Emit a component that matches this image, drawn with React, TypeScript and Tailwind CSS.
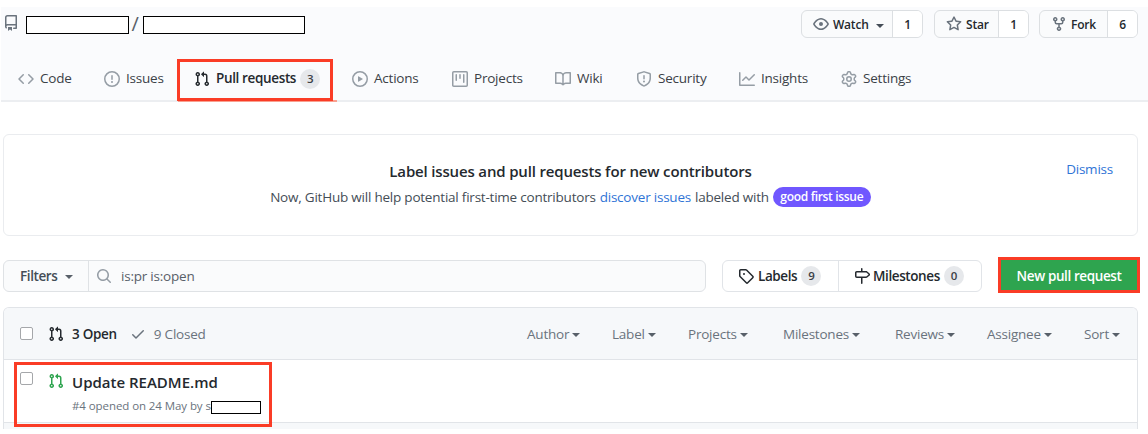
import type { ReactNode } from "react";

const paths = {
  repo: "M2 2.5A2.5 2.5 0 014.5 0h8.75a.75.75 0 01.75.75v12.5a.75.75 0 01-.75.75h-2.5a.75.75 0 110-1.5h1.75v-2h-8a1 1 0 00-.714 1.7.75.75 0 01-1.072 1.05A2.495 2.495 0 012 11.5v-9zm10.5-1V9h-8c-.356 0-.694.074-1 .208V2.5a1 1 0 011-1h8zM5 12.25v3.25a.25.25 0 00.4.2l1.45-1.087a.25.25 0 01.3 0L8.6 15.7a.25.25 0 00.4-.2v-3.25a.25.25 0 00-.25-.25h-3.5a.25.25 0 00-.25.25z",
  code: "M4.72 3.22a.75.75 0 011.06 1.06L2.06 8l3.72 3.72a.75.75 0 11-1.06 1.06L.47 8.53a.75.75 0 010-1.06l4.25-4.25zm6.56 0a.75.75 0 10-1.06 1.06L13.94 8l-3.72 3.72a.75.75 0 101.06 1.06l4.25-4.25a.75.75 0 000-1.06l-4.25-4.25z",
  issue: "M8 1.5a6.5 6.5 0 100 13 6.5 6.5 0 000-13zM0 8a8 8 0 1116 0A8 8 0 010 8zm9 3a1 1 0 11-2 0 1 1 0 012 0zm-.25-6.25a.75.75 0 00-1.5 0v3.5a.75.75 0 001.5 0v-3.5z",
  pull: "M7.177 3.073L9.573.677A.25.25 0 0110 .854v4.792a.25.25 0 01-.427.177L7.177 3.427a.25.25 0 010-.354zM3.75 2.5a.75.75 0 100 1.5.75.75 0 000-1.5zm-2.25.75a2.25 2.25 0 113 2.122v5.256a2.251 2.251 0 11-1.5 0V5.372A2.25 2.25 0 011.5 3.25zM11 2.5h-1V4h1a1 1 0 011 1v5.628a2.251 2.251 0 101.5 0V5A2.5 2.5 0 0011 2.5zm1 10.25a.75.75 0 111.5 0 .75.75 0 01-1.5 0zM3.75 12a.75.75 0 100 1.5.75.75 0 000-1.5z",
  play: "M1.5 8a6.5 6.5 0 1113 0 6.5 6.5 0 01-13 0zM8 0a8 8 0 100 16A8 8 0 008 0zM6.379 5.227A.25.25 0 006 5.442v5.117a.25.25 0 00.379.214l4.264-2.559a.25.25 0 000-.428L6.379 5.227z",
  project: "M1.75 0A1.75 1.75 0 000 1.75v12.5C0 15.216.784 16 1.75 16h12.5A1.75 1.75 0 0016 14.25V1.75A1.75 1.75 0 0014.25 0H1.75zM1.5 1.75a.25.25 0 01.25-.25h12.5a.25.25 0 01.25.25v12.5a.25.25 0 01-.25.25H1.75a.25.25 0 01-.25-.25V1.75zM11.75 3a.75.75 0 00-.75.75v7.5a.75.75 0 001.5 0v-7.5a.75.75 0 00-.75-.75zm-8.25.75a.75.75 0 011.5 0v5.5a.75.75 0 01-1.5 0v-5.5zM8 3a.75.75 0 00-.75.75v3.5a.75.75 0 001.5 0v-3.5A.75.75 0 008 3z",
  book: "M0 1.75A.75.75 0 01.75 1h4.253c1.227 0 2.317.59 3 1.501A3.744 3.744 0 0111.006 1h4.245a.75.75 0 01.75.75v10.5a.75.75 0 01-.75.75h-4.507a2.25 2.25 0 00-1.591.659l-.622.621a.75.75 0 01-1.06 0l-.622-.621A2.25 2.25 0 005.258 13H.75a.75.75 0 01-.75-.75V1.75zm8.755 3a2.25 2.25 0 012.25-2.25H14.5v9h-3.757c-.71 0-1.4.201-1.992.572l.004-7.322zm-1.504 7.324l.004-5.073-.002-2.253A2.25 2.25 0 005.003 2.5H1.5v9h3.757a3.75 3.75 0 011.994.574z",
  shield: "M7.467.133a1.75 1.75 0 011.066 0l5.25 1.68A1.75 1.75 0 0115 3.48V7c0 1.566-.32 3.182-1.303 4.682-.983 1.498-2.585 2.813-5.032 3.855a1.7 1.7 0 01-1.33 0c-2.447-1.042-4.049-2.357-5.032-3.855C1.32 10.182 1 8.566 1 7V3.48a1.75 1.75 0 011.217-1.667l5.25-1.68zm.61 1.429a.25.25 0 00-.153 0l-5.25 1.68a.25.25 0 00-.174.238V7c0 1.358.275 2.666 1.057 3.86.784 1.194 2.121 2.34 4.366 3.297a.2.2 0 00.154 0c2.245-.956 3.582-2.104 4.366-3.298C13.225 9.666 13.5 8.36 13.5 7V3.48a.25.25 0 00-.174-.237l-5.25-1.68zM9 10.5a1 1 0 11-2 0 1 1 0 012 0zm-.25-5.75a.75.75 0 10-1.5 0v3a.75.75 0 001.5 0v-3z",
  graph: "M1.5 1.75a.75.75 0 00-1.5 0v12.5c0 .414.336.75.75.75h14.5a.75.75 0 000-1.5H1.5V1.75zm14.28 2.53a.75.75 0 00-1.06-1.06L10 7.94 7.53 5.47a.75.75 0 00-1.06 0L3.22 8.72a.75.75 0 001.06 1.06L7 7.06l2.47 2.47a.75.75 0 001.06 0l5.25-5.25z",
  gear: "M7.429 1.525a6.593 6.593 0 011.142 0c.036.003.108.036.137.146l.289 1.105c.147.56.55.967.997 1.189.174.086.341.183.501.29.417.278.97.423 1.53.27l1.102-.303c.11-.03.175.016.195.046.219.31.41.641.573.989.014.031.022.11-.059.19l-.815.806c-.411.406-.562.957-.53 1.456a4.588 4.588 0 010 .582c-.032.499.119 1.05.53 1.456l.815.806c.08.08.073.159.059.19a6.494 6.494 0 01-.573.99c-.02.029-.086.074-.195.045l-1.103-.303c-.559-.153-1.112-.008-1.529.27-.16.107-.327.204-.5.29-.449.222-.851.628-.998 1.189l-.289 1.105c-.029.11-.101.143-.137.146a6.613 6.613 0 01-1.142 0c-.036-.003-.108-.037-.137-.146l-.289-1.105c-.147-.56-.55-.967-.997-1.189a4.502 4.502 0 01-.501-.29c-.417-.278-.97-.423-1.53-.27l-1.102.303c-.11.03-.175-.016-.195-.046a6.492 6.492 0 01-.573-.989c-.014-.031-.022-.11.059-.19l.815-.806c.411-.406.562-.957.53-1.456a4.587 4.587 0 010-.582c.032-.499-.119-1.05-.53-1.456l-.815-.806c-.08-.08-.073-.159-.059-.19a6.44 6.44 0 01.573-.99c.02-.029.086-.075.195-.045l1.103.303c.559.153 1.112.008 1.529-.27.16-.107.327-.204.5-.29.449-.222.851-.628.998-1.189l.289-1.105c.029-.11.101-.143.137-.146zM8 0c-.236 0-.47.01-.701.03-.743.065-1.29.615-1.458 1.261l-.29 1.106c-.017.066-.078.158-.211.224a5.994 5.994 0 00-.668.386c-.123.082-.233.09-.3.071L3.27 2.776c-.644-.177-1.392.02-1.82.63a7.977 7.977 0 00-.704 1.217c-.315.675-.111 1.422.363 1.891l.815.806c.05.048.098.147.088.294a6.084 6.084 0 000 .772c.01.147-.038.246-.088.294l-.815.806c-.474.469-.678 1.216-.363 1.891.2.428.436.835.704 1.218.428.609 1.176.806 1.82.63l1.103-.303c.066-.019.176-.011.299.071.213.143.436.272.668.386.133.066.194.158.212.224l.289 1.106c.169.646.715 1.196 1.458 1.26a8.094 8.094 0 001.402 0c.743-.064 1.29-.614 1.458-1.26l.29-1.106c.017-.066.078-.158.211-.224a5.98 5.98 0 00.668-.386c.123-.082.233-.09.3-.071l1.102.302c.644.177 1.392-.02 1.82-.63.268-.382.505-.789.704-1.217.315-.675.111-1.422-.364-1.891l-.814-.806c-.05-.048-.098-.147-.088-.294a6.1 6.1 0 000-.772c-.01-.147.039-.246.088-.294l.814-.806c.475-.469.679-1.216.364-1.891a7.992 7.992 0 00-.704-1.218c-.428-.609-1.176-.806-1.82-.63l-1.103.303c-.066.019-.176.011-.299-.071a5.991 5.991 0 00-.668-.386c-.133-.066-.194-.158-.212-.224L10.16 1.29C9.99.645 9.444.095 8.701.031A8.094 8.094 0 008 0zm1.5 8a1.5 1.5 0 11-3 0 1.5 1.5 0 013 0zM11 8a3 3 0 11-6 0 3 3 0 016 0z",
  eye: "M1.679 7.932c.412-.621 1.242-1.75 2.366-2.717C5.175 4.242 6.527 3.5 8 3.5c1.473 0 2.824.742 3.955 1.715 1.124.967 1.954 2.096 2.366 2.717a.119.119 0 010 .136c-.412.621-1.242 1.75-2.366 2.717C10.825 11.758 9.473 12.5 8 12.5c-1.473 0-2.824-.742-3.955-1.715C2.92 9.818 2.09 8.69 1.679 8.068a.119.119 0 010-.136zM8 2c-1.981 0-3.67.992-4.933 2.078C1.797 5.169.88 6.423.43 7.1a1.619 1.619 0 000 1.798c.45.678 1.367 1.932 2.637 3.024C4.329 13.008 6.019 14 8 14c1.981 0 3.67-.992 4.933-2.078 1.27-1.091 2.187-2.345 2.637-3.023a1.619 1.619 0 000-1.798c-.45-.678-1.367-1.932-2.637-3.023C11.671 2.992 9.981 2 8 2zm0 8a2 2 0 100-4 2 2 0 000 4z",
  star: "M8 .25a.75.75 0 01.673.418l1.882 3.815 4.21.612a.75.75 0 01.416 1.279l-3.046 2.97.719 4.192a.75.75 0 01-1.088.791L8 12.347l-3.766 1.98a.75.75 0 01-1.088-.79l.72-4.194L.818 6.374a.75.75 0 01.416-1.28l4.21-.611L7.327.668A.75.75 0 018 .25zm0 2.445L6.615 5.5a.75.75 0 01-.564.41l-3.097.45 2.24 2.184a.75.75 0 01.216.664l-.528 3.084 2.769-1.456a.75.75 0 01.698 0l2.77 1.456-.53-3.084a.75.75 0 01.216-.664l2.24-2.183-3.096-.45a.75.75 0 01-.564-.41L8 2.694v.001z",
  fork: "M5 3.25a.75.75 0 11-1.5 0 .75.75 0 011.5 0zm0 2.122a2.25 2.25 0 10-1.5 0v.878A2.25 2.25 0 005.75 8.5h1.5v2.128a2.251 2.251 0 101.5 0V8.5h1.5a2.25 2.25 0 002.25-2.25v-.878a2.25 2.25 0 10-1.5 0v.878a.75.75 0 01-.75.75h-4.5A.75.75 0 015 6.25v-.878zm3.75 7.378a.75.75 0 11-1.5 0 .75.75 0 011.5 0zm3-8.75a.75.75 0 100-1.5.75.75 0 000 1.5z",
  tag: "M2.5 7.775V2.75a.25.25 0 01.25-.25h5.025a.25.25 0 01.177.073l6.25 6.25a.25.25 0 010 .354l-5.025 5.025a.25.25 0 01-.354 0l-6.25-6.25a.25.25 0 01-.073-.177zm-1.5 0V2.75C1 1.784 1.784 1 2.75 1h5.025c.464 0 .91.184 1.238.513l6.25 6.25a1.75 1.75 0 010 2.474l-5.026 5.026a1.75 1.75 0 01-2.474 0l-6.25-6.25A1.75 1.75 0 011 7.775zM6 5a1 1 0 100 2 1 1 0 000-2z",
  milestone: "M7.75 0a.75.75 0 01.75.75V3h3.634c.414 0 .814.147 1.13.414l2.07 1.75a1.75 1.75 0 010 2.672l-2.07 1.75a1.75 1.75 0 01-1.13.414H8.5v5.25a.75.75 0 11-1.5 0V10H2.75A1.75 1.75 0 011 8.25v-3.5C1 3.784 1.784 3 2.75 3H7V.75A.75.75 0 017.75 0zm0 8.5h4.384a.25.25 0 00.161-.06l2.07-1.75a.25.25 0 000-.38l-2.07-1.75a.25.25 0 00-.161-.06H2.75a.25.25 0 00-.25.25v3.5c0 .138.112.25.25.25h5z",
  search: "M11.5 7a4.499 4.499 0 11-8.998 0A4.499 4.499 0 0111.5 7zm-.82 4.74a6 6 0 111.06-1.06l3.04 3.04a.75.75 0 11-1.06 1.06l-3.04-3.04z",
  check: "M13.78 4.22a.75.75 0 010 1.06l-7.25 7.25a.75.75 0 01-1.06 0L2.22 9.28a.75.75 0 011.06-1.06L6 10.94l6.72-6.72a.75.75 0 011.06 0z",
};

type IconName = keyof typeof paths;

function Icon({ name, className = "" }: { name: IconName; className?: string }) {
  return (
    <svg viewBox="0 0 16 16" className={`size-4 shrink-0 fill-current ${className}`}>
      <path fillRule="evenodd" d={paths[name]} />
    </svg>
  );
}

function Caret({ className = "" }: { className?: string }) {
  return (
    <svg viewBox="0 0 8 4" className={`h-1 w-2 shrink-0 fill-current ${className}`}>
      <path d="M0 0h8L4 4z" />
    </svg>
  );
}

function Counter({ children }: { children: ReactNode }) {
  return (
    <span className="flex h-5 w-5 shrink-0 items-center justify-center rounded-full bg-[#e6e8eb] text-[11.5px] font-semibold text-[#3b4046]">
      {children}
    </span>
  );
}

const tabs: { icon: IconName; label: string; width: string; count?: number }[] = [
  { icon: "code", label: "Code", width: "w-[86px]" },
  { icon: "issue", label: "Issues", width: "w-[90px]" },
  { icon: "pull", label: "Pull requests", width: "w-[158px]", count: 3 },
  { icon: "play", label: "Actions", width: "w-[100px]" },
  { icon: "project", label: "Projects", width: "w-[103px]" },
  { icon: "book", label: "Wiki", width: "w-[81px]" },
  { icon: "shield", label: "Security", width: "w-[103px]" },
  { icon: "graph", label: "Insights", width: "w-[102px]" },
  { icon: "gear", label: "Settings", width: "w-[90px]" },
];

const actions: { icon: IconName; label: string; count: number; width: string; pad: string; gap: string; caret?: boolean }[] = [
  { icon: "eye", label: "Watch", count: 1, width: "w-[122px]", pad: "pl-[11px]", gap: "mr-[11px]", caret: true },
  { icon: "star", label: "Star", count: 1, width: "w-[95px]", pad: "pl-[11px]", gap: "mr-[10px]" },
  { icon: "fork", label: "Fork", count: 6, width: "w-[99px]", pad: "pl-[11px]", gap: "mr-[10px]" },
];

const menus = [
  { label: "Author", width: "w-[85px]" },
  { label: "Label", width: "w-[76px]" },
  { label: "Projects", width: "w-[95px]" },
  { label: "Milestones", width: "w-[112px]" },
  { label: "Reviews", width: "w-[92px]" },
  { label: "Assignee", width: "w-[97px]" },
  { label: "Sort", width: "w-[53px]" },
];

function Checkbox() {
  return <span className="block size-[13px] shrink-0 rounded-[2px] border border-[#a5a7aa] bg-white" />;
}

export default function App() {
  return (
    <div className="relative h-[434px] w-[1148px] overflow-hidden bg-white pt-[7px] font-['Open_Sans','Noto_Sans',sans-serif] text-[13.5px] tracking-[-0.22px] whitespace-nowrap text-[#24292e]">
      <header className="ml-px flex h-[95px] flex-col border-b-2 border-[#eceef1] bg-[#fafbfd]">
        <div className="flex h-[34px] items-center">
          <Icon name="repo" className="-mt-[2px] ml-[2px] text-[#6a737d]" />
          <span className="mt-[2px] ml-[7px] h-[18px] w-[103px] border border-black bg-white" />
          <span className="w-[12px] text-center text-[20px] text-[#586069]">/</span>
          <span className="mt-[2px] ml-[2px] h-[18px] w-[162px] border border-black bg-white" />
          <div className="ml-auto flex">
            {actions.map((a) => (
              <div
                key={a.label}
                className={`flex h-[28px] overflow-hidden rounded-md border border-[#dcdfe2] bg-[#fafbfc] text-[12px] font-semibold ${a.width} ${a.gap}`}
              >
                <div className={`flex flex-1 items-center ${a.pad}`}>
                  <Icon name={a.icon} className="mr-1 text-[#6a737d]" />
                  <span className="pt-px">{a.label}</span>
                  {a.caret && <Caret className="mt-1 ml-[7px] text-[#444d56]" />}
                </div>
                <span className="flex w-[30px] items-center justify-center border-l border-[#dcdfe2] bg-white pt-px">
                  {a.count}
                </span>
              </div>
            ))}
          </div>
        </div>
        <nav className="flex flex-1 items-center pt-[16px] pl-[17px]">
          {tabs.map((t) => (
            <div
              key={t.label}
              className={`flex shrink-0 items-center ${t.width} ${t.count ? "font-semibold tracking-[-0.36px]" : ""}`}
            >
              <Icon name={t.icon} className={t.count ? "text-[#24292e]" : "text-[#959da5]"} />
              <span className={`ml-[6px] ${t.count ? "mr-[4px]" : "text-[#3b4147]"}`}>{t.label}</span>
              {t.count && <Counter>{t.count}</Counter>}
            </div>
          ))}
        </nav>
      </header>

      <section className="mt-[32px] ml-[3px] flex h-[102px] w-[1135px] rounded-md border border-[#eaecef]">
        <div className="w-[266px]" />
        <div className="flex w-[601px] flex-col items-center pt-[25px]">
          <h2 className="text-[15px] leading-[22px] font-semibold tracking-[-0.16px]">
            Label issues and pull requests for new contributors
          </h2>
          <p className="mt-[4px] flex items-center leading-[20px] text-[#444d56]">
            Now, GitHub will help potential first-time contributors
            <a className="ml-1 text-[#2f74d6]">discover issues</a>
            <span className="ml-1">labeled with</span>
            <span className="mt-px ml-1 flex h-5 w-[98px] items-center justify-center rounded-full bg-[#7057ff] text-[12px] font-semibold tracking-[-0.32px] text-white">
              good first issue
            </span>
          </p>
        </div>
        <a className="ml-auto pt-[24px] pr-[24px] leading-[20px] text-[#2f74d6]">Dismiss</a>
      </section>

      <div className="mt-[24px] ml-[3px] flex h-[32px]">
        <div className="flex w-[703px] rounded-md border border-[#dfe2e5] bg-[#fafbfc]">
          <div className="flex w-[85px] items-center border-r border-[#dfe2e5] pl-[16px] font-semibold tracking-[-0.4px] text-[#444d56]">
            <span className="pt-px">Filters</span>
            <Caret className="mt-[2px] ml-[8px] text-[#586069]" />
          </div>
          <div className="flex items-center pl-[7px] text-[#586069]">
            <Icon name="search" className="mr-[9px] text-[#959da5]" />
            <span className="pt-px">is:pr is:open</span>
          </div>
        </div>
        <div className="ml-[16px] flex w-[260px] rounded-md border border-[#e1e4e8] font-semibold tracking-[-0.4px]">
          <div className="flex w-[116px] items-center border-r border-[#e1e4e8] pl-[15px]">
            <Icon name="tag" />
            <span className="mr-[4px] ml-[4px] pt-px">Labels</span>
            <Counter>9</Counter>
          </div>
          <div className="flex items-center pl-[15px]">
            <Icon name="milestone" />
            <span className="mr-[4px] ml-[3px] pt-px">Milestones</span>
            <Counter>0</Counter>
          </div>
        </div>
        <button className="-mt-[3px] ml-[16px] flex h-[36px] w-[142px] items-center justify-center border-[3px] border-[#fa3c26] bg-[#2ea44f] pt-[3px] font-semibold tracking-[-0.4px] text-white">
          New pull request
        </button>
      </div>

      <section className="mt-[15px] ml-[3px] h-[122px] w-[1135px] overflow-hidden rounded-t-md border border-b-0 border-[#e1e4e8]">
        <div className="flex h-[52px] items-center border-b border-[#e1e4e8] bg-[#f6f8fa] pl-[16px] text-[#6a737d]">
          <Checkbox />
          <Icon name="pull" className="mt-px ml-[15px] text-[#24292e]" />
          <span className="ml-[8px] pt-[2px] font-semibold tracking-[-0.3px] text-[#24292e]">3 Open</span>
          <Icon name="check" className="mt-px ml-[13px]" />
          <span className="ml-[8px] pt-[2px]">9 Closed</span>
          <div className="ml-auto flex">
            {menus.map((m) => (
              <span key={m.label} className={`flex items-center ${m.width}`}>
                <span className="pt-[2px]">{m.label}</span>
                <Caret className="mt-[3px] ml-[3px] text-[#586069]" />
              </span>
            ))}
          </div>
        </div>
        <div className="flex h-[63px] border-b border-[#e1e4e8] pl-[16px]">
          <div className="pt-[12px]">
            <Checkbox />
          </div>
          <Icon name="pull" className="mt-[13px] ml-[15px] text-[#2ea44f]" />
          <div className="ml-[8px] pt-[10px]">
            <h3 className="text-[15px] leading-[24px] font-semibold tracking-[0]">Update README.md</h3>
            <p className="mt-[3px] flex h-[18px] items-center text-[11.5px] tracking-[-0.08px] text-[#6a737d]">
              #4 opened on 24 May by s
              <span className="mt-[3px] h-[13px] w-[50px] border border-black bg-white" />
            </p>
          </div>
        </div>
        <div className="h-[8px] bg-[#f6f8fa]" />
      </section>

      <div className="absolute top-[100px] left-[178px] h-[2px] w-[159px] bg-[#f9a08f]" />
      <div className="absolute top-[59px] left-[177px] h-[42px] w-[156px] border-[3px] border-[#fa3c26]" />
      <div className="absolute top-[362px] left-[14px] h-[65px] w-[258px] border-[3px] border-[#fa3c26]" />
    </div>
  );
}
